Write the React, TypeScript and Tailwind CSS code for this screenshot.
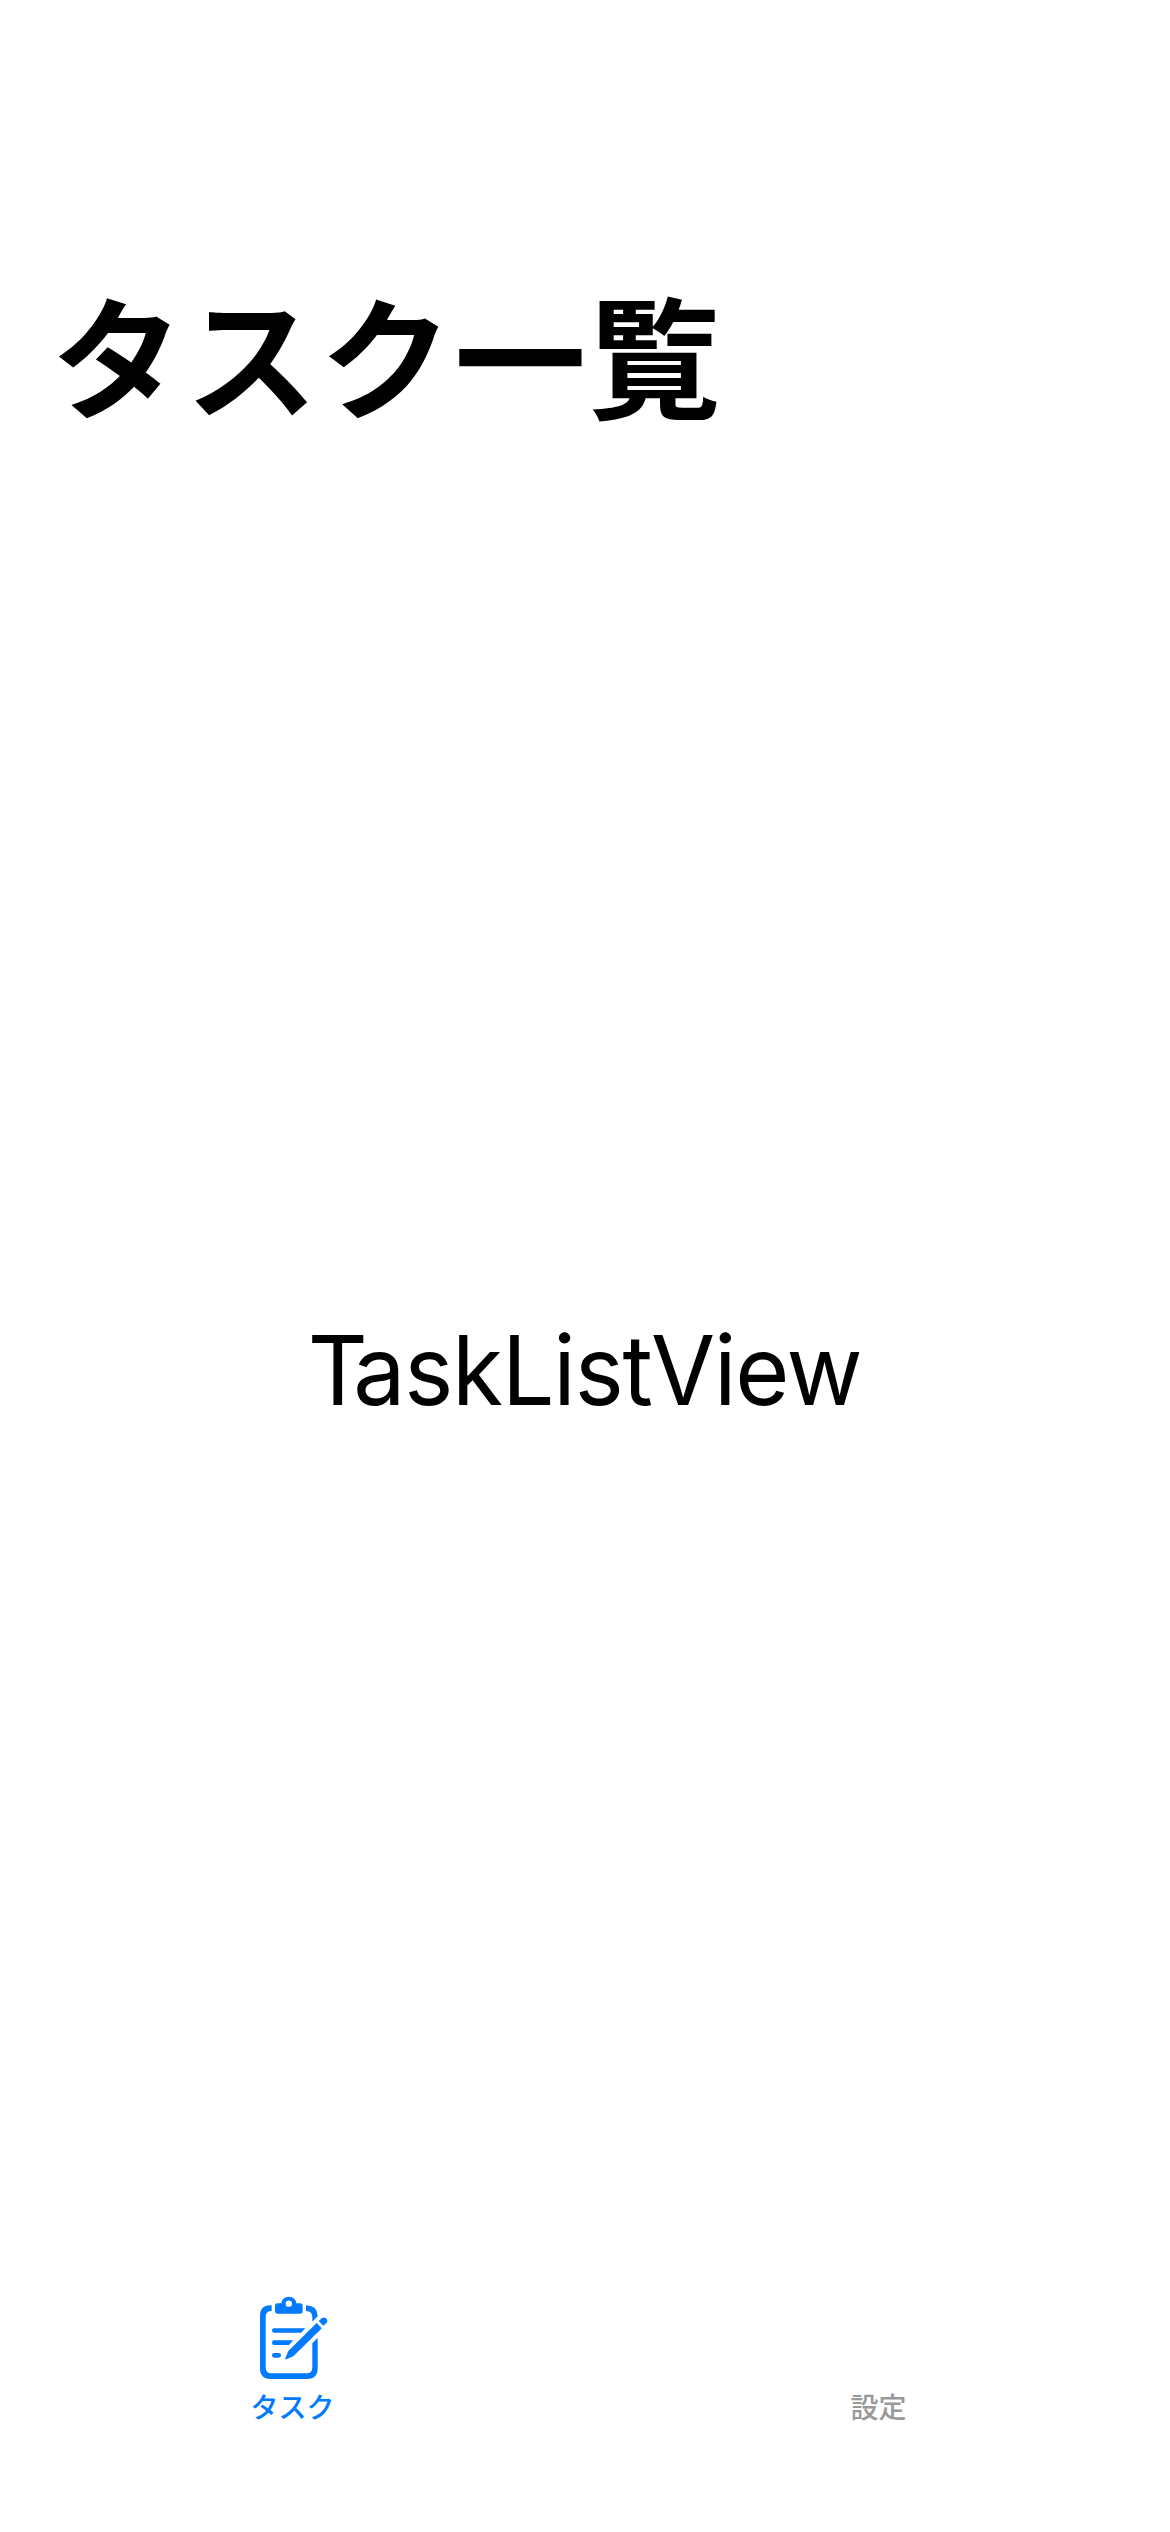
function ClipboardPencilIcon() {
  return (
    <svg className="h-[110px] w-[110px]" viewBox="0 0 330 330" fill="none" aria-hidden="true">
      <path d="M95 76H91Q60 76 60 108V265Q60 297 92 297H201Q233 297 233 265V174L217 190V262Q217 280 201 280H93Q77 280 77 262V110Q77 93 95 93Z" fill="#007aff" />
      <path d="M198 76V93Q217 93 217 111V125L233 109V107Q231 76 198 76Z" fill="#007aff" />
      <path fillRule="evenodd" d="M113 70H124Q127 50 146.500 50Q166 50 169 70H180Q188 70 188 78V93Q188 101 180 101H113Q105 101 105 93V78Q105 70 113 70ZM146.500 61.500A9.500 9.500 0 1 0 146.500 80.500A9.500 9.500 0 1 0 146.500 61.500Z" fill="#007aff" />
      <path d="M102 145H196L183 158H102Q96 158 96 151.500Q96 145 102 145Z" fill="#007aff" />
      <path d="M102 181H160L147 195H102Q96 195 96 188Q96 181 102 181Z" fill="#007aff" />
      <rect x="96" y="219" width="27" height="14" rx="7" fill="#007aff" />
      <path d="M231 130L244 143Q245 144 244 146L160 229L139 238Q134 239 136 234L145 213L229 130Q230 129 231 130Z" fill="#007aff" />
      <path d="M236 123L246 114Q252 110 258 115Q265 122 260 128L250 137Z" fill="#007aff" />
    </svg>
  );
}

export default function App() {
  return (
    <div className="flex h-[2532px] w-[1170px] flex-col overflow-hidden bg-white text-black">
      <h1 className="mt-[256px] ml-[51px] h-[192px] whitespace-nowrap font-['Noto_Sans_CJK_JP',sans-serif] text-[132px] leading-[192px] font-bold tracking-[2.4px]">
        タスク一覧
      </h1>
      <main className="flex h-[1845px] items-center justify-center font-['Inter',sans-serif] text-[96.500px] tracking-[-1.2px]">
        <span className="scale-x-[0.963]">
          <span className="tracking-[-15px]">T</span>askListView
        </span>
      </main>
      <nav className="-mt-[13px] grid h-[252px] shrink-0 grid-cols-2 font-['Noto_Sans_CJK_JP',sans-serif] text-[28px] leading-[42px] font-medium">
        <button className="flex flex-col items-center justify-start text-[#007aff]">
          <span className="ml-[5px] flex h-[108px]">
            <ClipboardPencilIcon />
          </span>
          <span className="-mt-[3px]">タスク</span>
        </button>
        <button className="flex flex-col items-center justify-start pt-[105px] pl-[2px] text-[#999999]">
          設定
        </button>
      </nav>
    </div>
  );
}
